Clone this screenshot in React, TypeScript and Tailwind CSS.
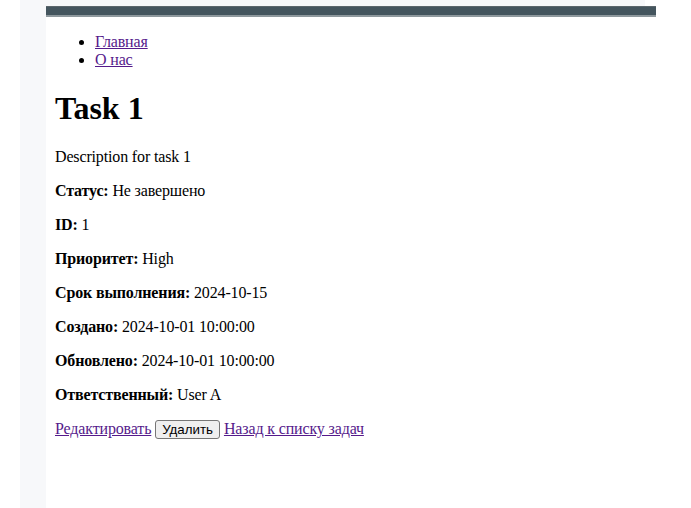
import React from "react"

const linkCls = "text-[#551a8b] underline"

function Field({ label, value }: { label: string; value: string }) {
  return (
    <p className="my-4">
      <strong className="font-bold">{label}</strong> {value}
    </p>
  )
}

export default function App() {
  return (
    <div className="flex min-h-[508px] bg-white font-['Liberation_Serif',serif] text-[16px] leading-[18px] tracking-[-0.15px] text-black">
      <div className="w-[20px] shrink-0" />
      <div className="w-[26px] shrink-0 bg-[#f7f8fa]" />
      <div className="flex flex-1 flex-col">
        <div className="h-[6px] w-[599px] bg-[#f7f8fa]" />
        <div className="h-[11px] w-[610px] border-t border-b-2 border-t-[#5b666c] border-b-[#8e989d] bg-[#44555e]" />

        <main className="pl-[9px]">
          <nav>
            <ul className="my-4 list-disc pl-10">
              <li>
                <a href="#" className={linkCls}>Главная</a>
              </li>
              <li>
                <a href="#" className={linkCls}>О нас</a>
              </li>
            </ul>
          </nav>

          <h1 className="mt-[21.44px] mb-[20.44px] text-[32px] leading-[normal] font-bold tracking-normal">Task 1</h1>
          <p className="my-4">Description for task 1</p>
          <Field label="Статус:" value="Не завершено" />
          <Field label="ID:" value="1" />
          <Field label="Приоритет:" value="High" />
          <Field label="Срок выполнения:" value="2024-10-15" />
          <Field label="Создано:" value="2024-10-01 10:00:00" />
          <Field label="Обновлено:" value="2024-10-01 10:00:00" />
          <Field label="Ответственный:" value="User A" />

          <p className="my-4">
            <a href="#" className={linkCls}>Редактировать</a>{" "}
            <button className="rounded-[3px] border border-[#767676] bg-[#efefef] px-[6px] py-[1px] align-baseline font-['Liberation_Sans',Arial,sans-serif] text-[13.33px] leading-[normal] tracking-normal text-black">
              Удалить
            </button>{" "}
            <a href="#" className={linkCls}>Назад к списку задач</a>
          </p>
        </main>
      </div>
    </div>
  )
}
